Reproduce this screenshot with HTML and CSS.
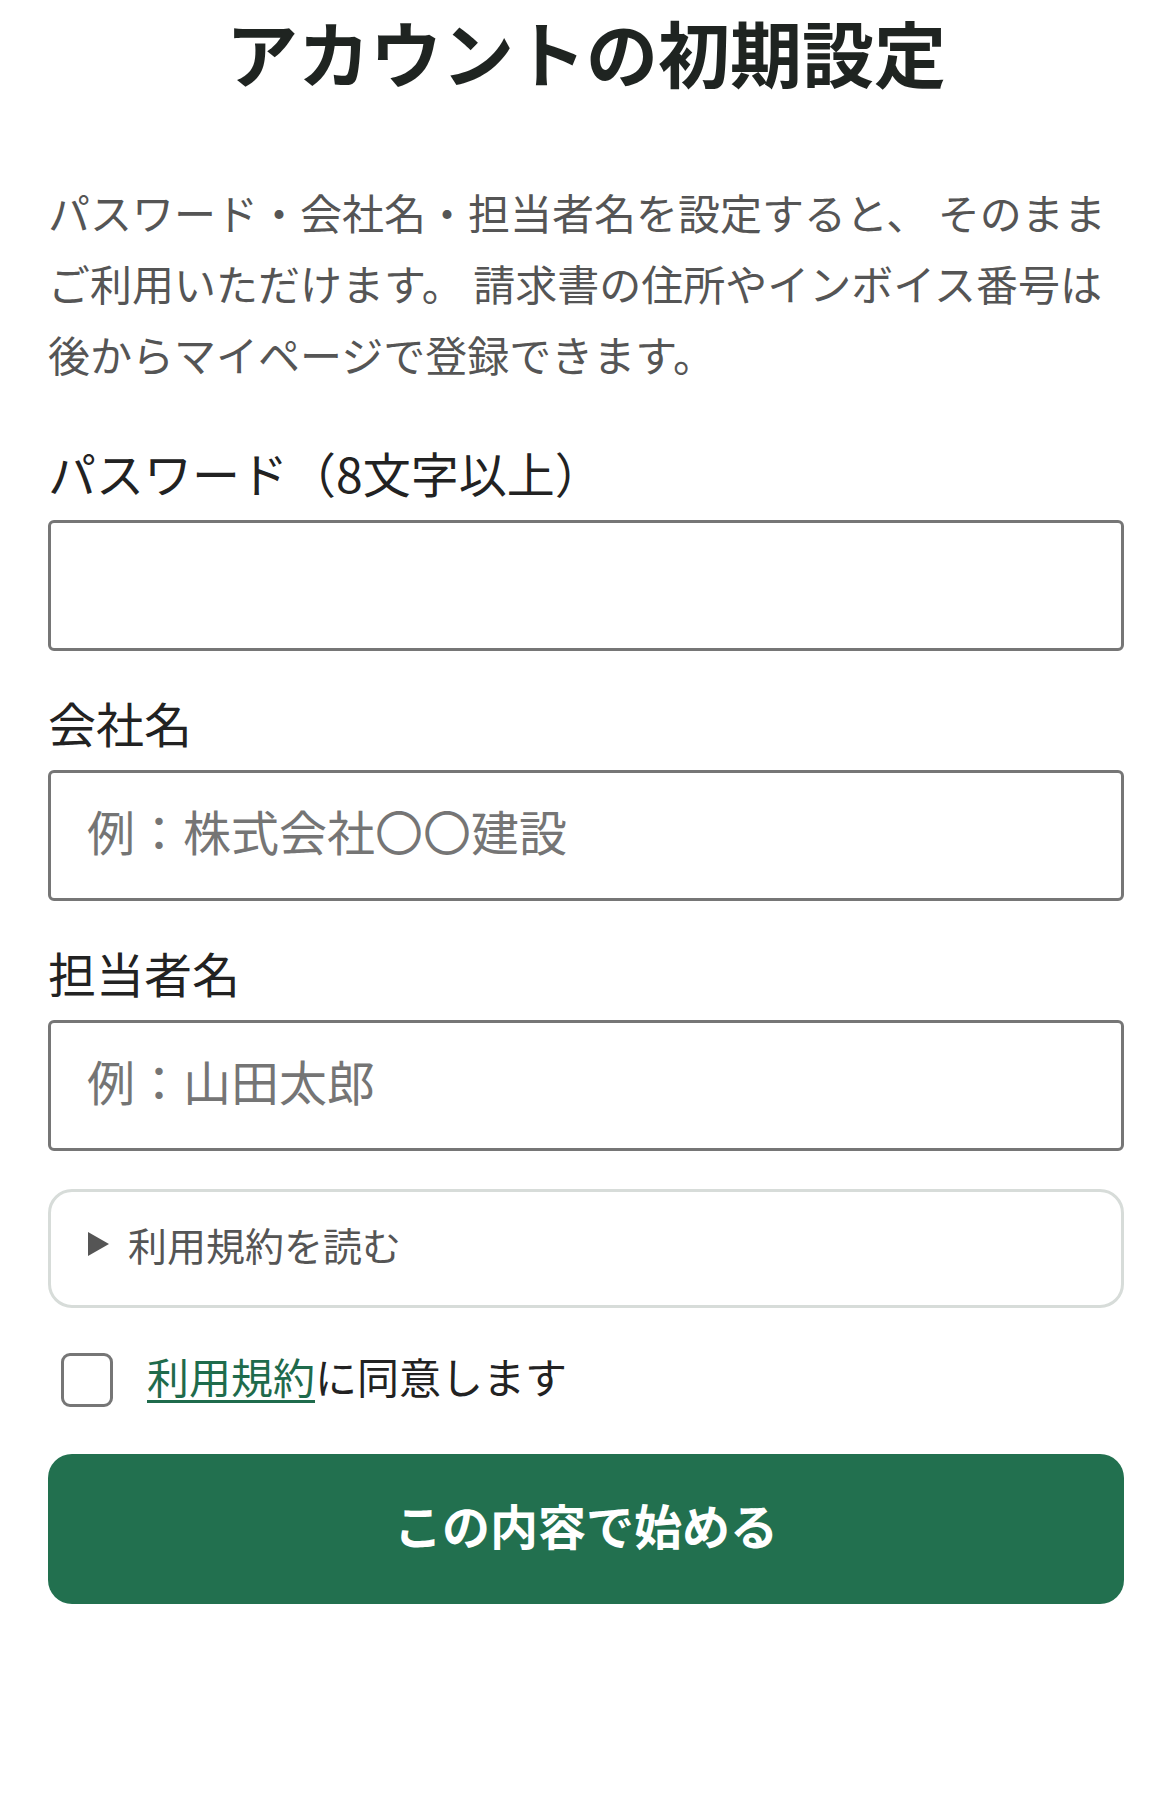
FILE: index.html
```html
<!DOCTYPE html>
<html lang="ja">

<head>
    <meta charset="utf-8">
    <title>アカウントの初期設定</title>
    <link rel="stylesheet" href="styles.css">
</head>

<body>
    <main class="setup">
        <h1 class="setup-title">アカウントの初期設定</h1>
        <p class="setup-lead">パスワード・会社名・担当者名を設定すると、 そのままご利用いただけます。 請求書の住所やインボイス番号は後からマイページで登録できます。</p>

        <form class="setup-form">
            <div class="field">
                <label class="field-label" for="password">パスワード（8文字以上）</label>
                <input class="field-input" id="password" type="password">
            </div>
            <div class="field">
                <label class="field-label" for="company">会社名</label>
                <input class="field-input" id="company" type="text" placeholder="例：株式会社〇〇建設">
            </div>
            <div class="field">
                <label class="field-label" for="person">担当者名</label>
                <input class="field-input" id="person" type="text" placeholder="例：山田太郎">
            </div>

            <details class="terms">
                <summary>利用規約を読む</summary>
            </details>

            <label class="agree">
                <input class="agree-box" type="checkbox">
                <span class="agree-text"><a href="#">利用規約</a>に同意します</span>
            </label>

            <button class="submit" type="button">この内容で始める</button>
        </form>
    </main>
</body>

</html>
```

FILE: styles.css
```css
* {
    box-sizing: border-box;
}

body {
    margin: 0;
    background: #fff;
    font-family: "Noto Sans CJK JP", "Noto Sans", sans-serif;
    color: #222;
}

.setup {
    padding: 0 46px 0 48px;
}

.setup-title {
    margin: 0;
    padding-bottom: 7px;
    font-size: 72px;
    line-height: 101px;
    font-weight: 700;
    text-align: center;
    color: #1f2421;
}

.setup-lead {
    margin: 68px 0 0;
    font-size: 42px;
    line-height: 71px;
    color: #555;
}

.setup-form {
    margin-top: 47px;
}

.field + .field {
    margin-top: 35px;
}

.field-label {
    display: block;
    font-size: 48px;
    line-height: 72px;
    color: #222;
}

.field-input {
    display: block;
    width: 100%;
    height: 131px;
    margin-top: 12px;
    padding: 0 36px 12px;
    border: 3px solid #767676;
    border-radius: 6px;
    font-family: inherit;
    font-size: 48px;
    color: #222;
    outline: none;
}

.field-input::placeholder {
    color: #757575;
}

.terms {
    margin-top: 38px;
    border: 3px solid #d7dcd9;
    border-radius: 24px;
}

.terms summary {
    display: flex;
    align-items: center;
    height: 113px;
    padding: 0 0 10px 37px;
    list-style: none;
    font-size: 39px;
    color: #555;
    cursor: pointer;
}

.terms summary::-webkit-details-marker {
    display: none;
}

.terms summary::before {
    content: "";
    margin-right: 19px;
    border-left: 21px solid #555;
    border-top: 12px solid transparent;
    border-bottom: 12px solid transparent;
}

.agree {
    display: flex;
    align-items: center;
    height: 60px;
    margin-top: 42px;
    font-size: 42px;
    color: #222;
}

.agree-box {
    appearance: none;
    -webkit-appearance: none;
    flex: none;
    width: 52px;
    height: 54px;
    margin: 0 34px 0 13px;
    border: 3px solid #767676;
    border-radius: 9px;
    background: #fff;
}

.agree-text {
    padding-bottom: 9px;
}

.agree a {
    color: #1f6b4c;
    text-decoration-thickness: 3px;
    text-underline-offset: 6px;
}

.submit {
    display: block;
    width: 100%;
    height: 150px;
    margin-top: 44px;
    padding-bottom: 11px;
    border: none;
    border-radius: 24px;
    background: #22704f;
    font-family: inherit;
    font-size: 48px;
    font-weight: 700;
    color: #fff;
}
```
